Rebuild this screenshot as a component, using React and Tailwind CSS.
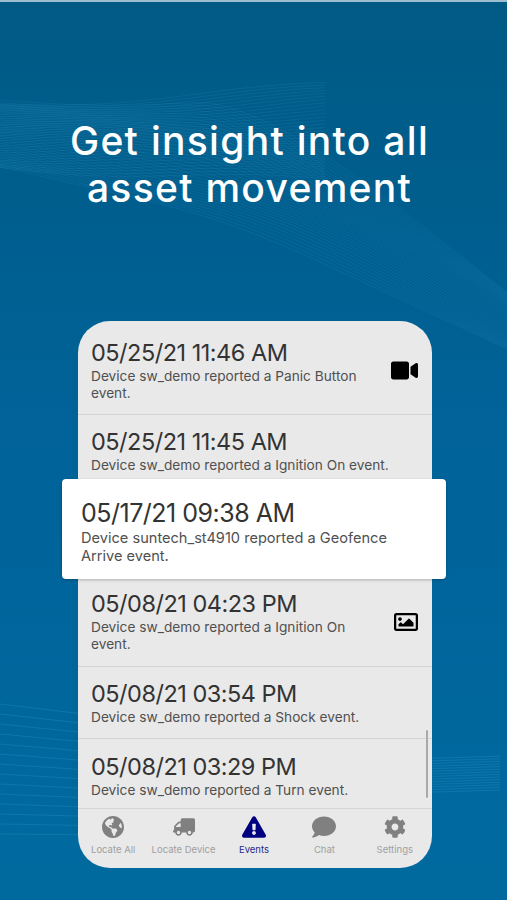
import { FaGlobeAmericas, FaTruck, FaExclamationTriangle, FaComment, FaCog, FaVideo, FaRegImage } from 'react-icons/fa'

const TABS = [
  { label: 'Locate All', icon: FaGlobeAmericas, size: 'text-[22px]' },
  { label: 'Locate Device', icon: FaTruck, size: 'text-[22px] -scale-x-100' },
  { label: 'Events', icon: FaExclamationTriangle, size: 'text-[24px]', active: true },
  { label: 'Chat', icon: FaComment, size: 'text-[24px]' },
  { label: 'Settings', icon: FaCog, size: 'text-[22px]' },
]

function wavePath(points) {
  return 'M' + points.map(p => p[0].toFixed(1) + ' ' + p[1].toFixed(1)).join('L')
}

function Waves() {
  const upper = []
  const mesh = []
  for (let i = 0; i < 36; i++) {
    const t = i / 35
    const pts = []
    const cross = []
    for (let x = 0; x <= 507; x += 13) {
      const u = x / 507
      const top = 100 + 4 * Math.sin(u * 3) + Math.pow(Math.max(u - 0.4, 0), 1.4) * 390
      const bottom = 165 + 130 * Math.pow(u, 1.1) + 55 * Math.pow(u, 2.4)
      pts.push([x, top + (bottom - top) * t + 3 * Math.sin(u * 9 + t * 7)])
      if (x < 330) cross.push([x, 104 + 62 * t + (x / 330) * 34 * (t - 0.5) + 5 * Math.sin(u * 8 - t * 6)])
    }
    upper.push(wavePath(pts))
    mesh.push(wavePath(cross))
  }
  const lower = []
  for (let i = 0; i < 14; i++) {
    const left = []
    const right = []
    for (let x = 0; x <= 80; x += 10) left.push([x, 704 + i * 10 + x * 0.12 * (1 - i / 14)])
    for (let x = 430; x <= 507; x += 10) right.push([x, 756 + i * 2.6 + (507 - x) * 0.03])
    lower.push(wavePath(left))
    lower.push(wavePath(right))
  }
  return (
    <svg className="absolute inset-0" width="507" height="900" viewBox="0 0 507 900" fill="none">
      {upper.map((d, i) => <path key={i} d={d} stroke="#4fb0e0" strokeOpacity="0.18" strokeWidth="0.6" />)}
      {mesh.map((d, i) => <path key={i} d={d} stroke="#4fb0e0" strokeOpacity="0.2" strokeWidth="0.6" />)}
      {lower.map((d, i) => <path key={i} d={d} stroke="#4fb0e0" strokeOpacity="0.28" strokeWidth="0.7" />)}
    </svg>
  )
}

function EventRow({ date, text, height, top, icon, width = 'w-[280px]', border = true }) {
  return (
    <div className={`flex items-start justify-between pl-[13px] pr-[14px] ${height} ${top} ${border ? 'border-b border-[#d5d5d5]' : ''}`}>
      <div className={width}>
        <div className="text-[23.5px] leading-[28px] tracking-[-0.5px] text-[#333333]">{date}</div>
        <div className="text-[13.7px] leading-[17px] mt-[1px] text-[#505050]">{text}</div>
      </div>
      {icon}
    </div>
  )
}

export default function App() {
  return (
    <div className="relative w-[507px] h-[900px] overflow-hidden bg-gradient-to-b from-[#005a84] via-[#00639a] to-[#006a9f] font-['Inter',sans-serif]">
      <Waves />
      <div className="relative h-[2px] bg-[#9fbfd0]" />

      <h1 className="relative mt-[115px] pr-[8px] text-center text-[39px] leading-[47px] tracking-[1.3px] font-medium text-white">
        Get insight into all<br />asset movement
      </h1>

      <div className="relative mt-[110px] ml-[78px] w-[354px] h-[547px] rounded-[32px] bg-[#e9e9e9]">
        <EventRow
          date="05/25/21 11:46 AM"
          text="Device sw_demo reported a Panic Button event."
          height="h-[94px]"
          top="pt-[18px]"
          icon={<FaVideo className="mt-[18px] text-[27px] text-black" />}
        />
        <EventRow
          date="05/25/21 11:45 AM"
          text="Device sw_demo reported a Ignition On event."
          height="h-[64px]"
          top="pt-[13px]"
          width="w-[320px]"
          border={false}
        />

        <div className="-ml-4 -mr-[14px] h-[100px] pt-[19px] pl-[19px] rounded-[4px] bg-white shadow-[0_1px_3px_rgba(0,0,0,0.25)]">
          <div className="text-[25px] leading-[30px] tracking-[-0.5px] text-[#333333]">05/17/21 09:38 AM</div>
          <div className="w-[330px] text-[14.6px] leading-[18px] mt-[1px] text-[#505050]">Device suntech_st4910 reported a Geofence Arrive event.</div>
        </div>

        <EventRow
          date="05/08/21 04:23 PM"
          text="Device sw_demo reported a Ignition On event."
          height="h-[88px]"
          top="pt-[11px]"
          icon={<FaRegImage className="mt-[20px] text-[24px] text-black" />}
        />
        <EventRow
          date="05/08/21 03:54 PM"
          text="Device sw_demo reported a Shock event."
          height="h-[72px]"
          top="pt-[13px]"
        />
        <EventRow
          date="05/08/21 03:29 PM"
          text="Device sw_demo reported a Turn event."
          height="h-[70px]"
          top="pt-[14px]"
        />

        <div className="grid grid-cols-5 pt-[6px] pr-[2px]">
          {TABS.map(({ label, icon: Icon, active, size }) => (
            <div key={label} className="flex flex-col items-center">
              <Icon className={`h-[24px] ${size} ${active ? 'text-[#000080]' : 'text-[#808080]'}`} />
              <span className={`mt-[4px] text-[9.5px] leading-[14px] whitespace-nowrap ${active ? 'text-[#2a2a8a]' : 'text-[#a0a0a0]'}`}>{label}</span>
            </div>
          ))}
        </div>

        <div className="absolute left-[348px] top-[409px] w-[2px] h-[68px] bg-[#a9a9a9] rounded-full" />
      </div>
    </div>
  )
}
